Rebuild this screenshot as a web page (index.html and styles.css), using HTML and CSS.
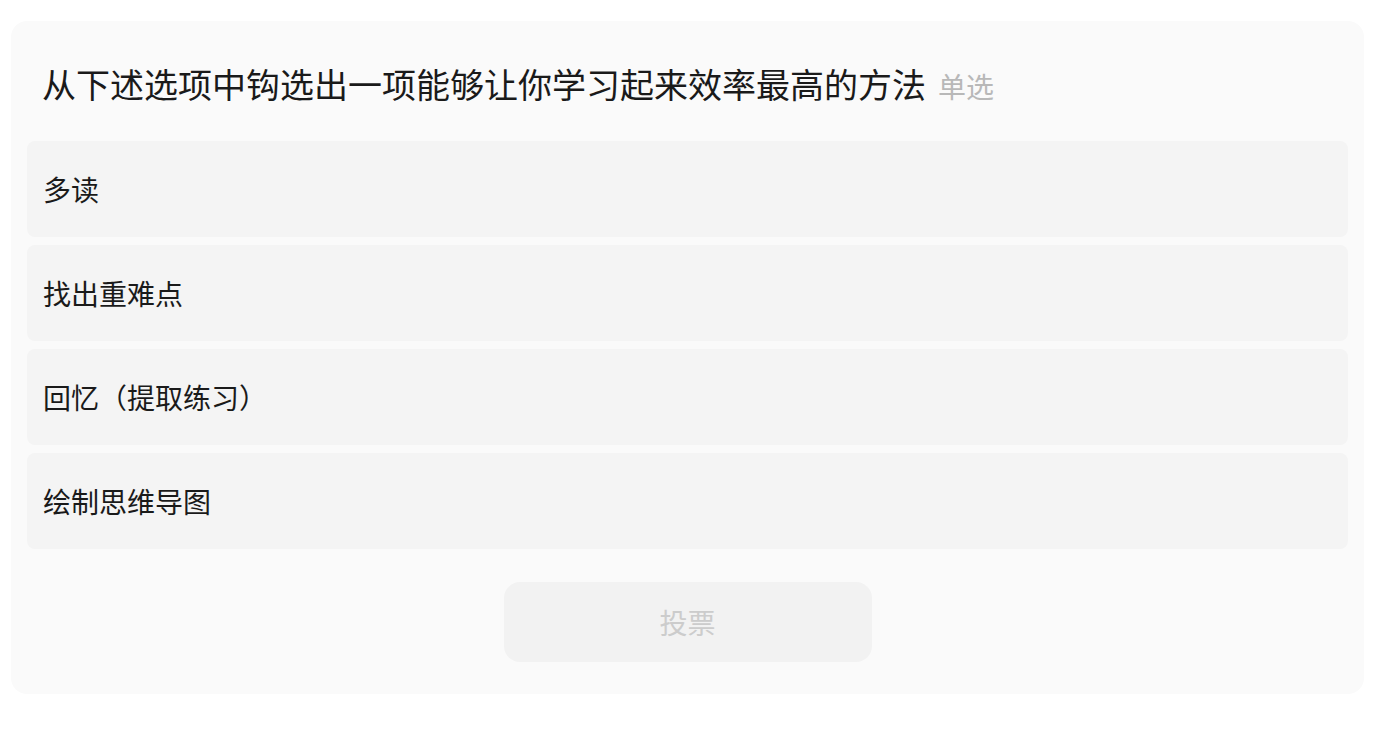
FILE: index.html
```html
<!DOCTYPE html>
<html lang="zh-CN">
<head>
    <meta charset="UTF-8">
    <meta name="viewport" content="width=device-width, initial-scale=1.0">
    <title>投票</title>
    <link rel="stylesheet" href="styles.css">
</head>
<body>
  <div class="poll-card">
    <!-- Question -->
    <div class="poll-title">
      从下述选项中钩选出一项能够让你学习起来效率最高的方法<span class="poll-type">单选</span>
    </div>

    <!-- Options -->
    <div class="poll-options">
      <div class="poll-option">多读</div>
      <div class="poll-option">找出重难点</div>
      <div class="poll-option">回忆（提取练习）</div>
      <div class="poll-option">绘制思维导图</div>
    </div>

    <!-- Vote Button -->
    <div class="poll-footer">
      <button class="vote-btn" disabled>投票</button>
    </div>
  </div>
</body>
</html>
```

FILE: styles.css
```css
body {
    font-family: "Noto Sans CJK SC", "Noto Sans", sans-serif;
    background-color: #ffffff;
    margin: 0;
    padding: 21px 28px 0 11px;
    color: #1a1a1a;
}

.poll-card {
    width: 1353px;
    background-color: #fafafa;
    border-radius: 16px;
    padding: 39px 16px 32px;
    box-sizing: border-box;
}

.poll-title {
    font-size: 34px;
    line-height: 48px;
    padding-left: 15px;
    margin-bottom: 33px;
    white-space: nowrap;
}

.poll-type {
    font-size: 28px;
    line-height: 1;
    color: #b8b8b8;
    margin-left: 12px;
}

.poll-options {
    display: flex;
    flex-direction: column;
    gap: 8px;
}

.poll-option {
    height: 96px;
    display: flex;
    align-items: center;
    padding: 0 16px;
    font-size: 28px;
    background-color: #f4f4f4;
    border-radius: 8px;
}

.poll-footer {
    display: flex;
    justify-content: center;
    margin-top: 33px;
}

.vote-btn {
    width: 368px;
    height: 80px;
    border: none;
    border-radius: 16px;
    background-color: #f2f2f2;
    color: #cccccc;
    font-family: inherit;
    font-size: 28px;
    cursor: not-allowed;
}
```
